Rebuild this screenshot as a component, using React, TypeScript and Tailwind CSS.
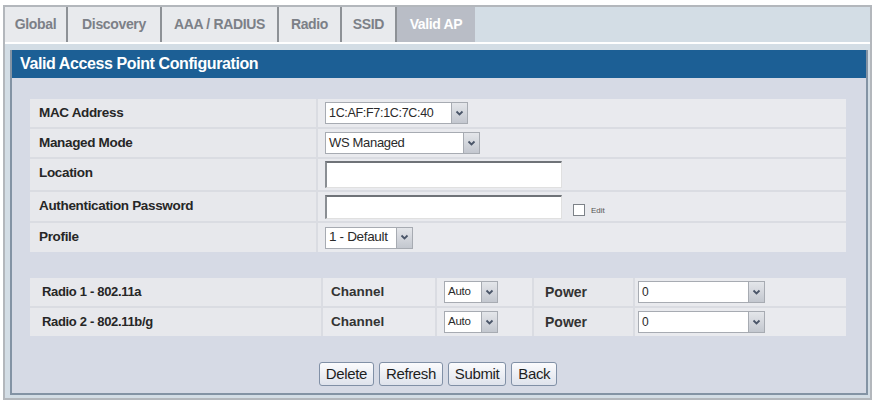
import React from 'react';

const font = { fontFamily: '"Liberation Sans", Arial, sans-serif' };

function Chevron() {
  return (
    <svg width="9" height="7" viewBox="0 0 9 7">
      <path d="M1.5 1.5 L4.5 4.5 L7.5 1.5" fill="none" stroke="#4a5568" strokeWidth="1.8" />
    </svg>
  );
}

function FakeSelect({ value, width, textSize = 'text-[12px]' }: { value: string; width: string; textSize?: string }) {
  return (
    <div className={`flex h-[22px] items-stretch border border-[#a7abb2] bg-white ${width}`}>
      <div className={`flex flex-1 items-center px-[3px] ${textSize} text-[#2a2a2a] tracking-tight`}>{value}</div>
      <div className="flex w-[16px] items-center justify-center border-l border-[#a7abb2] bg-gradient-to-b from-[#e4e6ea] to-[#c3c7cf]">
        <Chevron />
      </div>
    </div>
  );
}

function TextBox({ height }: { height: string }) {
  return <div className={`w-[237px] ${height} border-t-2 border-l-2 border-t-[#6f7378] border-l-[#8a8e93] border-b border-r border-b-[#e0e0e0] border-r-[#e0e0e0] bg-white`} />;
}

export default function App() {
  const tabs = ['Global', 'Discovery', 'AAA / RADIUS', 'Radio', 'SSID'];
  const tabWidths = ['w-[63px]', 'w-[94px]', 'w-[117px]', 'w-[63px]', 'w-[55px]'];

  const rows: { label: string; h: string; value: React.ReactNode }[] = [
    { label: 'MAC Address', h: 'h-[28px]', value: <FakeSelect value="1C:AF:F7:1C:7C:40" width="w-[143px]" textSize="text-[12.5px]" /> },
    { label: 'Managed Mode', h: 'h-[28px]', value: <FakeSelect value="WS Managed" width="w-[155px]" textSize="text-[13px]" /> },
    { label: 'Location', h: 'h-[31px]', value: <TextBox height="h-[27px]" /> },
    {
      label: 'Authentication Password',
      h: 'h-[29px]',
      value: (
        <div className="flex items-center">
          <TextBox height="h-[24px]" />
          <div className="ml-[11px] mt-[6px] h-[12px] w-[12px] border border-[#7d8288] bg-white" />
          <span className="ml-[6px] mt-[8px] text-[8px] text-[#555]">Edit</span>
        </div>
      ),
    },
    { label: 'Profile', h: 'h-[29px]', value: <FakeSelect value="1 - Default" width="w-[88px]" textSize="text-[13.5px]" /> },
  ];

  const radios = ['Radio 1 - 802.11a', 'Radio 2 - 802.11b/g'];

  return (
    <div className="h-[404px] w-[873px] overflow-hidden bg-white pt-[5px] pl-[3px] pr-[1px]" style={font}>
      <div className="h-[395px] border-2 border-[#b3b7bc] bg-[#d3dde5]">
        {/* Tabs */}
        <div className="flex h-[35px] items-end">
          {tabs.map((t, i) => (
            <div
              key={t}
              className={`flex h-[35px] items-center justify-center border-r-2 border-[#8d9196] bg-[#e8eaed] text-[14px] font-bold tracking-tight text-[#7c8087] ${tabWidths[i]}`}
            >
              {t}
            </div>
          ))}
          <div className="flex h-[35px] w-[78px] items-center justify-center bg-[#b9bdc6] text-[14px] font-bold tracking-tight text-white">Valid AP</div>
        </div>
        <div className="h-[2px] bg-white" />

        {/* Panel */}
        <div className="ml-[5px] mr-[2px] mt-[6px] border-2 border-[#8393a4] border-t-0">
          <div className="flex h-[28px] items-center bg-[#1c5f95] pl-[8px] text-[16px] font-bold tracking-tight text-white">
            Valid Access Point Configuration
          </div>
          <div className="h-[315px] bg-[#d6dae5] pl-[18px] pr-[20px] pt-[21px]">
            {/* Table 1 */}
            <div className="flex w-[816px] flex-col gap-[2px] bg-[#dadce2]">
              {rows.map((r) => (
                <div key={r.label} className={`flex gap-[2px] ${r.h}`}>
                  <div className="flex w-[286px] items-start bg-[#e7e8ec] pl-[9px] pt-[4px] text-[13.5px] font-bold tracking-tight text-[#262626]">
                    {r.label}
                  </div>
                  <div className="flex flex-1 items-center bg-[#e9eaee] pl-[7px]">{r.value}</div>
                </div>
              ))}
            </div>

            {/* Table 2 */}
            <div className="mt-[26px] flex w-[816px] flex-col gap-[2px] bg-[#dadce2]">
              {radios.map((r) => (
                <div key={r} className="flex h-[28px] gap-[2px]">
                  <div className="flex w-[291px] items-center bg-[#e7e8ec] pl-[12px] text-[13px] font-bold tracking-tight text-[#262626]">{r}</div>
                  <div className="flex w-[112px] items-center bg-[#e9eaee] pl-[8px] text-[13.5px] font-semibold text-[#333]">Channel</div>
                  <div className="flex w-[95px] items-center bg-[#e9eaee] pl-[7px]">
                    <FakeSelect value="Auto" width="w-[54px]" textSize="text-[11.5px]" />
                  </div>
                  <div className="flex w-[99px] items-center bg-[#e7e8ec] pl-[11px] text-[14px] font-bold text-[#333]">Power</div>
                  <div className="flex flex-1 items-center bg-[#e9eaee] pl-[3px]">
                    <FakeSelect value="0" width="w-[127px]" textSize="text-[12px]" />
                  </div>
                </div>
              ))}
            </div>

            {/* Buttons */}
            <div className="mt-[26px] flex justify-center gap-[5px]">
              {['Delete', 'Refresh', 'Submit', 'Back'].map((b) => (
                <button
                  key={b}
                  className="h-[24px] rounded-[3px] border border-[#8190a6] bg-gradient-to-b from-[#fbfbfd] to-[#dfe3ec] px-[6px] text-[15px] tracking-tight text-[#1e1e1e]"
                >
                  {b}
                </button>
              ))}
            </div>
          </div>
        </div>
      </div>
    </div>
  );
}
